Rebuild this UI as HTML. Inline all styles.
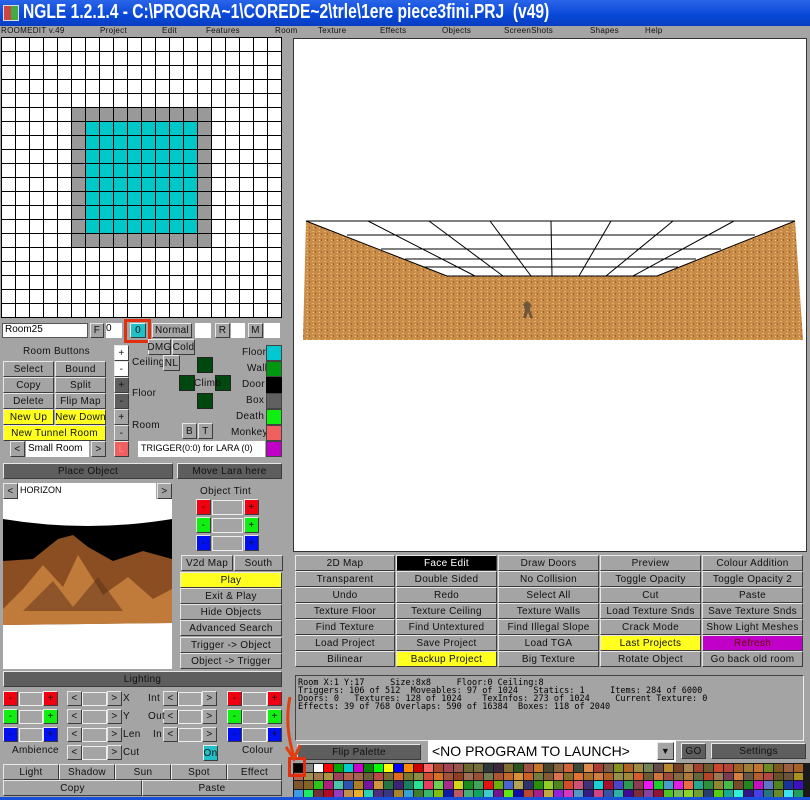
<!DOCTYPE html>
<html><head><meta charset="utf-8"><style>
*{margin:0;padding:0;box-sizing:border-box}
body{width:810px;height:800px;overflow:hidden;background:#a4a4a4;font-family:"Liberation Sans",sans-serif;position:relative}
.a{position:absolute}
.b{position:absolute;background:#a4a4a4;border:1px solid;border-color:#e8e8e8 #3c3c3c #3c3c3c #e8e8e8;font-size:10px;color:#111;text-align:center;display:flex;align-items:center;justify-content:center;white-space:nowrap;letter-spacing:.3px}
.d{background:#5e5e5e;color:#111}
.y{background:#ffff20}
.w{position:absolute;background:#fff;border:1px solid #555}
.t{position:absolute;font-size:10px;color:#111;white-space:nowrap;letter-spacing:.3px}
.r{background:#f00010}.g{background:#10f010}.bl{background:#0010f0}
</style></head><body>
<div class="a" style="left:0;top:0;width:810px;height:26px;background:linear-gradient(#2a64e8,#0848d8 60%,#0a3ec0);"></div>
<div class="a" style="left:3px;top:5px;width:16px;height:16px;background:linear-gradient(90deg,#c44 50%,#4a4 50%);border:1px solid #ddd"></div>
<div class="a" style="left:23px;top:1px;color:#fff;font-size:20px;font-weight:bold;white-space:nowrap;transform:scaleX(0.78);transform-origin:0 0">NGLE 1.2.1.4 - C:\PROGRA~1\COREDE~2\trle\1ere piece3fini.PRJ&nbsp; (v49)</div>
<div class="a" style="left:0;top:26px;width:810px;height:11px;background:#a4a4a4;font-size:8px;color:#000"></div>
<div class="t" style="top:26px;left:1px;font-size:8px">ROOMEDIT v.49</div>
<div class="t" style="top:26px;left:100px;font-size:8px">Project</div>
<div class="t" style="top:26px;left:162px;font-size:8px">Edit</div>
<div class="t" style="top:26px;left:206px;font-size:8px">Features</div>
<div class="t" style="top:26px;left:275px;font-size:8px">Room</div>
<div class="t" style="top:26px;left:318px;font-size:8px">Texture</div>
<div class="t" style="top:26px;left:380px;font-size:8px">Effects</div>
<div class="t" style="top:26px;left:442px;font-size:8px">Objects</div>
<div class="t" style="top:26px;left:504px;font-size:8px">ScreenShots</div>
<div class="t" style="top:26px;left:590px;font-size:8px">Shapes</div>
<div class="t" style="top:26px;left:645px;font-size:8px">Help</div>

<div class="a" style="left:1px;top:37px;width:281px;height:281px;background:#fff"></div>
<div class="a" style="left:71px;top:107px;width:140px;height:140px;background:#999"></div>
<div class="a" style="left:85px;top:121px;width:112px;height:112px;background:#00c8c8"></div>
<div class="a" style="left:1px;top:37px;width:281px;height:281px;background-image:linear-gradient(90deg,#000 1px,transparent 1px),linear-gradient(#000 1px,transparent 1px);background-size:14px 14px"></div>

<div class="a" style="left:293px;top:38px;width:514px;height:514px;background:#fff;border:1px solid #333"></div>
<svg class="a" style="left:293px;top:38px" width="514" height="514">
<defs><pattern id="s" width="6" height="6" patternUnits="userSpaceOnUse"><rect width="6" height="6" fill="#c98b48"/><rect x="1" y="1" width="2" height="1" fill="#e3b06a"/><rect x="4" y="3" width="1" height="2" fill="#9a6230"/><rect x="2" y="4" width="1" height="1" fill="#f0c88a"/></pattern></defs>
<polygon points="13,183 154,238 364,238 502,183 510,302 10,302" fill="url(#s)"/>
<g stroke="#000" stroke-width="1">
<line x1="13" y1="183" x2="502" y2="183"/><line x1="54" y1="197" x2="462" y2="197"/><line x1="88" y1="211" x2="428" y2="211"/><line x1="112" y1="221" x2="403" y2="221"/><line x1="130" y1="229" x2="385" y2="229"/><line x1="154" y1="238" x2="364" y2="238"/>
<line x1="13" y1="183" x2="154" y2="238"/><line x1="502" y1="183" x2="364" y2="238"/><line x1="75" y1="183" x2="182" y2="238"/><line x1="136" y1="183" x2="210" y2="238"/><line x1="197" y1="183" x2="238" y2="238"/><line x1="258" y1="183" x2="259" y2="238"/><line x1="318" y1="183" x2="286" y2="238"/><line x1="380" y1="183" x2="313" y2="238"/><line x1="441" y1="183" x2="340" y2="238"/></g>
<path d="M230 266 l4 -3 4 3 -1 6 3 8 -3 0 -2 -6 -2 6 -3 0 2 -8z" fill="#5a4a38" opacity=".8"/>
</svg>

<div class="w" style="left:2px;top:323px;width:86px;height:15px;font-size:10px;padding-left:2px">Room25</div>
<div class="b" style="left:90px;top:323px;width:14px;height:15px">F</div>
<div class="w" style="left:106px;top:323px;width:16px;height:15px;font-size:10px;border:none">0</div>
<div class="a" style="left:124px;top:319px;width:27px;height:24px;border:3px solid #e03010"></div>
<div class="b" style="left:130px;top:323px;width:16px;height:15px;background:#20c0c8">0</div>
<div class="b" style="left:152px;top:323px;width:40px;height:15px">Normal</div>
<div class="w" style="left:195px;top:323px;width:16px;height:15px;border:none"></div>
<div class="b" style="left:215px;top:323px;width:15px;height:15px">R</div>
<div class="w" style="left:231px;top:323px;width:14px;height:15px;border:none"></div>
<div class="b" style="left:248px;top:323px;width:15px;height:15px">M</div>
<div class="w" style="left:264px;top:323px;width:16px;height:15px;border:none"></div>

<div class="t" style="left:23px;top:346px">Room Buttons</div>
<div class="b" style="left:3px;top:361px;width:51px;height:16px">Select</div>
<div class="b" style="left:55px;top:361px;width:51px;height:16px">Bound</div>
<div class="b" style="left:3px;top:377px;width:51px;height:16px">Copy</div>
<div class="b" style="left:55px;top:377px;width:51px;height:16px">Split</div>
<div class="b" style="left:3px;top:393px;width:51px;height:16px">Delete</div>
<div class="b" style="left:55px;top:393px;width:51px;height:16px">Flip Map</div>
<div class="b y" style="left:3px;top:409px;width:51px;height:16px">New Up</div>
<div class="b y" style="left:55px;top:409px;width:51px;height:16px">New Down</div>
<div class="b y" style="left:3px;top:425px;width:103px;height:16px">New Tunnel Room</div>
<div class="b" style="left:10px;top:441px;width:15px;height:16px">&lt;</div>
<div class="w" style="left:26px;top:441px;width:63px;height:16px;font-size:10px;padding:2px 0 0 2px;border:none">Small Room</div>
<div class="b" style="left:91px;top:441px;width:15px;height:16px">&gt;</div>

<div class="b" style="left:114px;top:345px;width:15px;height:16px;background:#fff">+</div>
<div class="b" style="left:114px;top:361px;width:15px;height:16px;background:#fff">-</div>
<div class="b d" style="left:114px;top:377px;width:15px;height:16px">+</div>
<div class="b d" style="left:114px;top:393px;width:15px;height:16px">-</div>
<div class="b" style="left:114px;top:409px;width:15px;height:16px">+</div>
<div class="b" style="left:114px;top:425px;width:15px;height:16px">-</div>
<div class="b" style="left:114px;top:441px;width:15px;height:16px;background:#f06060;color:#f88">L</div>
<div class="t" style="left:132px;top:357px">Ceiling</div>
<div class="t" style="left:132px;top:388px">Floor</div>
<div class="t" style="left:132px;top:420px">Room</div>
<div class="b" style="left:148px;top:339px;width:23px;height:16px">DMG</div>
<div class="b" style="left:172px;top:339px;width:23px;height:16px">Cold</div>
<div class="b" style="left:163px;top:355px;width:17px;height:16px">NL</div>
<div class="a" style="left:197px;top:357px;width:16px;height:16px;background:#004810;border:1px solid #222"></div>
<div class="a" style="left:179px;top:375px;width:16px;height:16px;background:#004810;border:1px solid #222"></div>
<div class="a" style="left:215px;top:375px;width:16px;height:16px;background:#004810;border:1px solid #222"></div>
<div class="a" style="left:197px;top:393px;width:16px;height:16px;background:#004810;border:1px solid #222"></div>
<div class="t" style="left:194px;top:378px">Climb</div>
<div class="b" style="left:182px;top:423px;width:15px;height:16px">B</div>
<div class="b" style="left:198px;top:423px;width:15px;height:16px">T</div>
<div class="w" style="left:138px;top:441px;width:127px;height:16px;font-size:9px;padding:2px 3px;border:none">TRIGGER(0:0) for LARA (0)</div>
<div class="t" style="left:242px;top:347px">Floor</div>
<div class="t" style="left:247px;top:363px">Wall</div>
<div class="t" style="left:242px;top:379px">Door</div>
<div class="t" style="left:246px;top:395px">Box</div>
<div class="t" style="left:236px;top:411px">Death</div>
<div class="t" style="left:231px;top:427px">Monkey</div>
<div class="a" style="left:266px;top:345px;width:16px;height:16px;background:#00c8d0;border:1px solid #444"></div>
<div class="a" style="left:266px;top:361px;width:16px;height:16px;background:#009810;border:1px solid #444"></div>
<div class="a" style="left:266px;top:377px;width:16px;height:16px;background:#000"></div>
<div class="a" style="left:266px;top:393px;width:16px;height:16px;background:#606060;border:1px solid #444"></div>
<div class="a" style="left:266px;top:409px;width:16px;height:16px;background:#10f010;border:1px solid #444"></div>
<div class="a" style="left:266px;top:425px;width:16px;height:16px;background:#f06060;border:1px solid #444"></div>
<div class="a" style="left:266px;top:441px;width:16px;height:16px;background:#c000c8;border:1px solid #444"></div>

<div class="b d" style="left:3px;top:463px;width:170px;height:16px">Place Object</div>
<div class="b d" style="left:177px;top:463px;width:105px;height:16px">Move Lara here</div>
<div class="b" style="left:3px;top:483px;width:15px;height:16px">&lt;</div>
<div class="w" style="left:18px;top:483px;width:138px;height:16px;font-size:9px;padding:2px;border:none">HORIZON</div>
<div class="b" style="left:157px;top:483px;width:15px;height:16px">&gt;</div>
<svg class="a" style="left:3px;top:499px" width="169" height="170">
<rect width="169" height="170" fill="#fff"/>
<path d="M0 20 Q85 34 169 20 L169 42 L0 42Z" fill="#000"/>
<rect y="40" width="169" height="32" fill="#000"/>
<path d="M0 62 L30 60 55 40 70 36 85 48 110 62 140 52 169 60 L169 124 L0 126Z" fill="#8a4e22"/>
<path d="M0 110 L20 90 40 66 60 88 75 56 100 96 125 78 150 100 169 90 169 124 L0 126Z" fill="#c07a3a"/>
<path d="M20 112 L50 82 70 108 95 78 120 112Z" fill="#5a3018" opacity=".5"/>
</svg>
<div class="t" style="left:200px;top:486px">Object Tint</div>
<div class="b r" style="left:196px;top:499px;width:15px;height:16px">-</div><div class="a" style="left:212px;top:500px;width:31px;height:15px;border:1px solid #eee"></div><div class="b r" style="left:244px;top:499px;width:15px;height:16px">+</div>
<div class="b g" style="left:196px;top:517px;width:15px;height:16px">-</div><div class="a" style="left:212px;top:518px;width:31px;height:15px;border:1px solid #eee"></div><div class="b g" style="left:244px;top:517px;width:15px;height:16px">+</div>
<div class="b bl" style="left:196px;top:535px;width:15px;height:16px">-</div><div class="a" style="left:212px;top:536px;width:31px;height:15px;border:1px solid #eee"></div><div class="b bl" style="left:244px;top:535px;width:15px;height:16px">+</div>
<div class="b" style="left:181px;top:555px;width:52px;height:16px">V2d Map</div>
<div class="b" style="left:234px;top:555px;width:49px;height:16px">South</div>
<div class="b y" style="left:180px;top:572px;width:102px;height:16px">Play</div>
<div class="b" style="left:180px;top:588px;width:102px;height:16px">Exit &amp; Play</div>
<div class="b" style="left:180px;top:604px;width:102px;height:16px">Hide Objects</div>
<div class="b" style="left:180px;top:620px;width:102px;height:16px">Advanced Search</div>
<div class="b" style="left:180px;top:637px;width:102px;height:16px">Trigger -&gt; Object</div>
<div class="b" style="left:180px;top:653px;width:102px;height:16px">Object -&gt; Trigger</div>
<div class="b d" style="left:3px;top:671px;width:279px;height:16px">Lighting</div>

<div id="L"></div>
<div class="t" style="left:12px;top:745px">Ambience</div>
<div class="t" style="left:242px;top:745px">Colour</div>
<div class="b" style="left:203px;top:745px;width:15px;height:16px;background:#20c0c8">On</div>
<div class="b" style="left:3px;top:764px;width:56px;height:16px">Light</div>
<div class="b" style="left:59px;top:764px;width:56px;height:16px">Shadow</div>
<div class="b" style="left:115px;top:764px;width:56px;height:16px">Sun</div>
<div class="b" style="left:171px;top:764px;width:56px;height:16px">Spot</div>
<div class="b" style="left:227px;top:764px;width:55px;height:16px">Effect</div>
<div class="b" style="left:3px;top:780px;width:139px;height:16px">Copy</div>
<div class="b" style="left:142px;top:780px;width:140px;height:16px">Paste</div>

<div id="G"></div>
<div class="a" style="left:295px;top:675px;width:509px;height:66px;border:1px solid;border-color:#444 #eee #eee #444;font-family:'DejaVu Sans Mono','Liberation Mono',monospace;font-size:8.5px;line-height:8px;padding:3px 2px;white-space:pre;color:#000">Room X:1 Y:17     Size:8x8     Floor:0 Ceiling:8
Triggers: 106 of 512  Moveables: 97 of 1024   Statics: 1     Items: 284 of 6000
Doors: 0   Textures: 128 of 1024    TexInfos: 273 of 1024     Current Texture: 0
Effects: 39 of 768 Overlaps: 590 of 16384  Boxes: 118 of 2040</div>
<div class="b d" style="left:297px;top:744px;width:124px;height:16px">Flip Palette</div>
<div class="a" style="left:428px;top:740px;width:248px;height:22px;background:#fff;font-size:14px;padding:3px 4px">&lt;NO PROGRAM TO LAUNCH&gt;</div>
<div class="b" style="left:657px;top:742px;width:17px;height:18px;font-size:9px">▼</div>
<div class="b d" style="left:681px;top:743px;width:25px;height:16px">GO</div>
<div class="b d" style="left:711px;top:743px;width:95px;height:16px">Settings</div>
<div id="P" class="a" style="left:293px;top:763px;width:517px;height:34px;background:#1a1a1a"></div>
<div class="a" style="left:288px;top:757px;width:18px;height:20px;border:3px solid #e03010"></div>
<svg class="a" style="left:270px;top:695px" width="40" height="70"><path d="M20 2 Q14 30 24 62 M16 52 L24 64 30 50" stroke="#e04010" stroke-width="3" fill="none"/></svg>
<div class="a" style="left:0;top:797px;width:810px;height:3px;background:#1850d8"></div>
<script>
var h='';
function B(x,y,w,c,t){h+='<div class="b '+(c||'')+'" style="left:'+x+'px;top:'+y+'px;width:'+w+'px;height:15px">'+(t||'')+'</div>';}
function F(x,y,w){h+='<div class="a" style="left:'+x+'px;top:'+(y+1)+'px;width:'+w+'px;height:14px;border:1px solid #eee"></div>';}
var ys=[691,709,727],cl=['r','g','bl'];
for(var i=0;i<3;i++){var y=ys[i];B(3,y,15,cl[i],'-');F(19,y,24);B(43,y,15,cl[i],'+');B(227,y,15,cl[i],'-');F(242,y,25);B(267,y,15,cl[i],'+');}
var lab=['X','Y','Len','Cut'],ly=[691,709,727,745];
for(var i=0;i<4;i++){B(67,ly[i],15,'','&lt;');F(82,ly[i],25);B(107,ly[i],15,'','&gt;');h+='<div class="t" style="left:123px;top:'+(ly[i]+2)+'px">'+lab[i]+'</div>';}
var l2=['Int','Out','In'];
for(var i=0;i<3;i++){B(163,ly[i],15,'','&lt;');F(178,ly[i],24);B(202,ly[i],15,'','&gt;');h+='<div class="t" style="left:'+(i==2?153:148)+'px;top:'+(ly[i]+2)+'px">'+l2[i]+'</div>';}
document.getElementById('L').innerHTML=h;
h='';
var T=[['2D Map','Face Edit','Draw Doors','Preview','Colour Addition'],['Transparent','Double Sided','No Collision','Toggle Opacity','Toggle Opacity 2'],['Undo','Redo','Select All','Cut','Paste'],['Texture Floor','Texture Ceiling','Texture Walls','Load Texture Snds','Save Texture Snds'],['Find Texture','Find Untextured','Find Illegal Slope','Crack Mode','Show Light Meshes'],['Load Project','Save Project','Load TGA','Last Projects','Refresh'],['Bilinear','Backup Project','Big Texture','Rotate Object','Go back old room']];
var cx=[295,396,498,600,702,804];
for(var r=0;r<7;r++)for(var c=0;c<5;c++){var s='';var t=T[r][c];
if(t=='Face Edit')s='background:#000;color:#fff;';if(t=='Last Projects'||t=='Backup Project')s='background:#ffff20;';if(t=='Refresh')s='background:#c000c8;color:#600;';
h+='<div class="b" style="'+s+'left:'+cx[c]+'px;top:'+(555+r*16)+'px;width:'+(cx[c+1]-cx[c]-1)+'px;height:16px">'+t+'</div>';}
document.getElementById('G').innerHTML=h;
h='';var base=['#000','#888','#fff','#f00','#0a0','#0cc','#c0c','#080','#0f0','#ff0','#00f','#f80','#c00','#f66'];
var seed=7;function rnd(){seed=(seed*9301+49297)%233280;return seed/233280;}
for(var r=0;r<4;r++)for(var c=0;c<51;c++){var col;
if(r==0&&c<base.length)col=base[c];else{var k=rnd();
if(r<2){var R=100+rnd()*130|0,G=60+rnd()*90|0,Bb=30+rnd()*60|0;col='rgb('+R+','+G+','+Bb+')';if(r==0&&c<30&&k<.4)col='rgb('+(40+rnd()*80|0)+','+(30+rnd()*60|0)+','+(20+rnd()*40|0)+')';}
else{col='hsl('+(rnd()*360|0)+','+(40+rnd()*50|0)+'%,'+(30+rnd()*30|0)+'%)';}}
h+='<div class="a" style="left:'+(c*10+1)+'px;top:'+(r*8.5+1)+'px;width:9px;height:7.5px;background:'+col+'"></div>';}
document.getElementById('P').innerHTML=h;
</script>
</body></html>
